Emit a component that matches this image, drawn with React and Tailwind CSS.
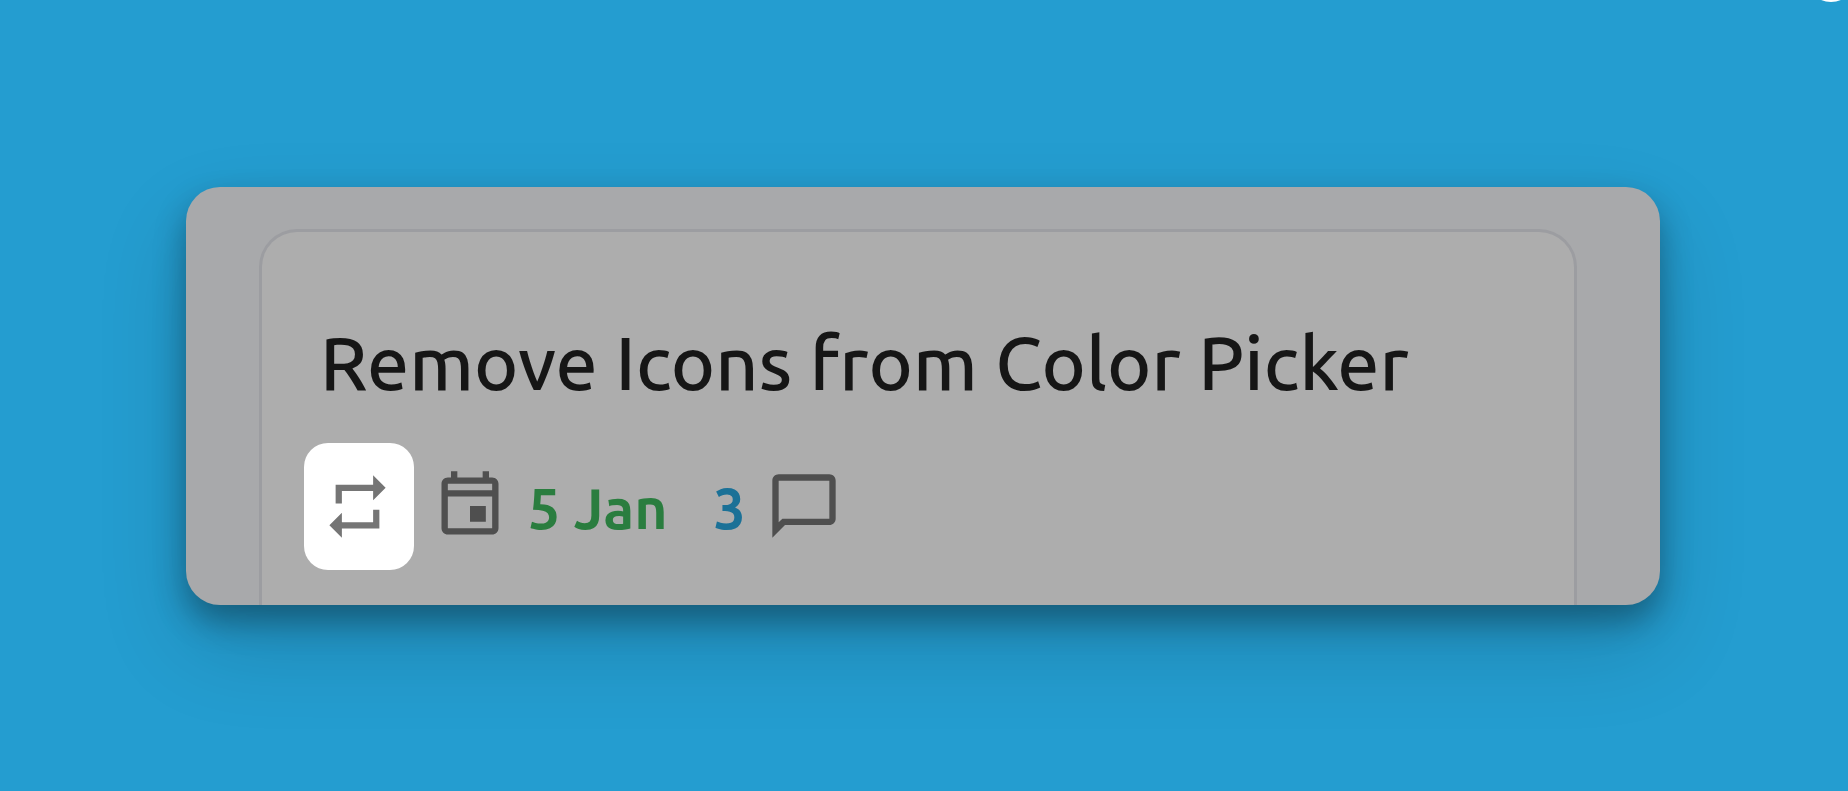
function RepeatIcon() {
  return (
    <svg viewBox="0 0 24 24" className="size-[75px]" fill="currentColor" aria-hidden="true">
      <path d="M7 7h10v3l4-4-4-4v3H5v6h2V7zm10 10H7v-3l-4 4 4 4v-3h12v-6h-2v4z" />
    </svg>
  );
}

function EventIcon() {
  return (
    <svg viewBox="0 0 24 24" className="size-[76px] shrink-0" fill="currentColor" aria-hidden="true">
      <path
        fillRule="evenodd"
        d="M19 3h-1V1h-2v2H8V1H6v2H5c-1.1 0-2 .9-2 2v14c0 1.1.9 2 2 2h14c1.1 0 2-.9 2-2V5c0-1.1-.9-2-2-2zM5 19V9h14v10H5zM5 7V5h14v2H5zM12 12h5v5h-5z"
      />
    </svg>
  );
}

function CommentIcon() {
  return (
    <svg viewBox="0 0 24 24" className="size-[76px] shrink-0" fill="currentColor" aria-hidden="true">
      <path
        fillRule="evenodd"
        d="M20 2H4c-1.1 0-2 .9-2 2v18l4-4h14c1.1 0 2-.9 2-2V4c0-1.1-.9-2-2-2zM20 16H5.17L4 17.17V4h16v12z"
      />
    </svg>
  );
}

export default function App() {
  return (
    <main className="relative flex min-h-screen items-center overflow-hidden bg-[#249dd0] pl-[186px] pr-[188px] font-['Ubuntu','Noto_Sans',sans-serif]">
      <div className="absolute -top-[50px] right-[-9px] size-[52px] rounded-full bg-white" />
      <section className="w-full overflow-hidden rounded-[34px] bg-[#a8a9ab] pl-[73px] pr-[83px] pt-[42px] shadow-[0_16px_32px_rgba(0,0,0,0.32),0_40px_90px_rgba(0,0,0,0.16)]">
        <article className="rounded-t-[38px] border-x-[3px] border-t-[3px] border-[#9c9da1] bg-[#adadad] pb-[35px] pl-[42px] pt-[82px]">
          <h1 className="pl-4 text-[75px] font-medium leading-[96px] whitespace-nowrap text-[#161616]">
            Remove Icons from Color Picker
          </h1>
          <div className="mt-[33px] flex items-center">
            <button
              type="button"
              aria-label="Repeat"
              className="flex h-[127px] w-[110px] shrink-0 items-center rounded-3xl bg-white pl-4 text-[#757575]"
            >
              <RepeatIcon />
            </button>
            <div className="ml-[18px] flex items-center text-[#4f4f4f]">
              <EventIcon />
              <span className="ml-5 pt-1 text-[57px] font-bold leading-[76px] text-[#2a7d3f]">5 Jan</span>
            </div>
            <div className="ml-[46px] flex items-center text-[#4f4f4f]">
              <span className="mr-5 pt-1 text-[57px] font-bold leading-[76px] text-[#1b7197]">3</span>
              <CommentIcon />
            </div>
          </div>
        </article>
      </section>
    </main>
  );
}
